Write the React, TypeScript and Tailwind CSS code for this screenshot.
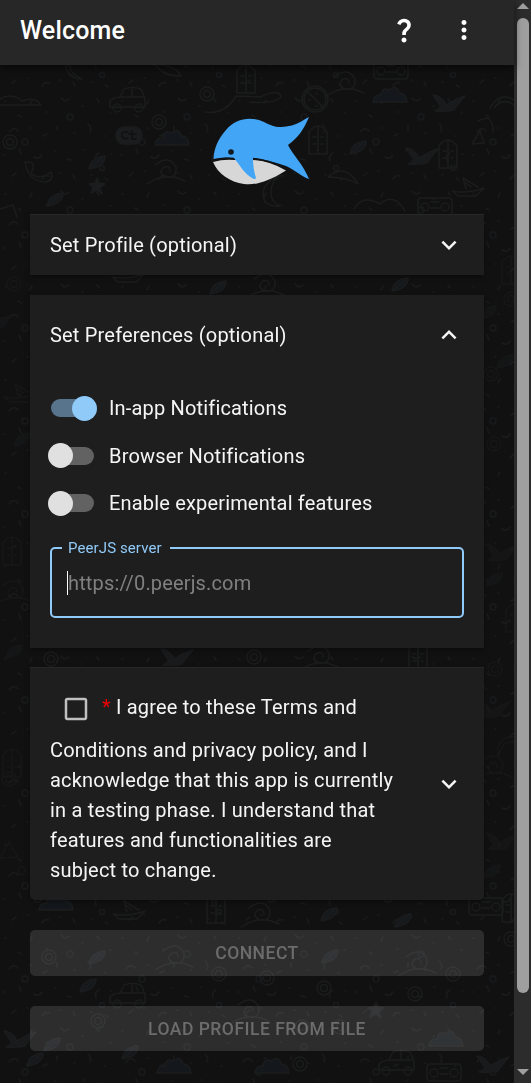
import React from 'react';
import { MdCheckBoxOutlineBlank, MdExpandLess, MdExpandMore, MdMoreVert, MdQuestionMark } from 'react-icons/md';

interface SettingSwitchProps {
  label: string;
  checked?: boolean;
}

const SettingSwitch: React.FC<SettingSwitchProps> = ({ label, checked = false }) => {
  return (
    <label className="flex items-center h-[47.5px]">
      <span className="flex items-center w-[43px] mr-[15px] ml-px">
        {checked ? (
          <>
            <span className="w-[43px] h-[18px] shrink-0 rounded-full bg-[#58748c]" />
            <span className="w-[25px] h-[25px] shrink-0 rounded-full bg-[#90caf9] -ml-[22px]" />
          </>
        ) : (
          <>
            <span className="w-[25px] h-[25px] shrink-0 rounded-full bg-[#e0e0e0] -ml-[3.5px] z-10" />
            <span className="w-[43px] h-[18px] shrink-0 rounded-full bg-[#626262] -ml-[21.5px]" />
          </>
        )}
      </span>
      <span className="text-[20px] leading-[30px] tracking-[0.17px]">{label}</span>
    </label>
  );
};

const Whale = () => (
  <svg className="w-[96px] h-[68px] shrink-0" viewBox="0 0 96 68">
    <path fill="#d7d7d7" d="M0 45Q10 42 22 43L40 43Q57 44 73 53.5C53 66 42 68 31 67C17 65 5 57 0 45Z" />
    <path fill="#42a5f5" d="M0.500 42C1 30 6 21 13 13C23 1 38-1 51 5C61 10 64 11 76 9C84 8 90 3 96 0C91 12 85 21 75 28C80 38 90 47 96 62C87 59 80 51 70 48C60 45 50 42 40 41C40 49 41 55 43 61Q42 63 39 61C32 57 28 50 21 41Q10 39.500 0.500 42Z" />
    {/* Dark seam between the back and the belly */}
    <path fill="none" stroke="#101418" strokeWidth="1.5" d="M0.500 43.500Q10 40.500 21 41.500M40 41.500Q58 43.500 73 52" />
    <circle cx="18" cy="35" r="2.8" fill="#101820" />
  </svg>
);

const Doodles = () => (
  <svg className="absolute inset-0 w-full h-full" fill="none" stroke="#1b1c1d" strokeWidth="1.5" strokeLinecap="round" strokeLinejoin="round">
    <defs>
      <g id="car"><path d="M-18 7V1Q-16-2-8-3L-4-11Q4-14 13-11L17-2V7ZM-8-3H15M4-11V-3" /><circle cx="-11" cy="8" r="4" /><circle cx="11" cy="8" r="4" /></g>
      <g id="bird"><path fill="#191a1b" d="M-16-8Q-7-7-3 2Q6-4 16-7Q7 3 5 7Q-2 9-14 8Q-7 5-9 2Z" /></g>
      <g id="leaf"><path fill="#16191c" d="M-8 6Q-6-6 8-7Q8 4-8 6L5-5" /></g>
      <g id="ring"><circle r="7" /><circle r="3.5" /></g>
      <g id="door"><path d="M-9 14V-8Q0-20 9-8V14ZM0-13V14M-5-3H-2M3-3H5M-5 4H-2M3 4H5" /></g>
      <g id="radio"><rect x="-17" y="-8" width="34" height="17" rx="3" /><circle cx="-10" cy="1" r="4" /><circle cx="10" cy="1" r="4" /><path d="M-4-4H4M-4 2H4" /></g>
      <g id="star"><path fill="#1c1d1e" d="M0-8L2-3L8-2L3 2L5 8L0 4L-6 7L-4 1L-8-2L-2-3Z" /></g>
      <g id="cloud"><path fill="#14181c" d="M-17 8Q-16 0-9 1Q-7-8-1-4Q7-10 9-1Q16-1 17 8Z" /></g>
      <g id="boat"><path d="M-16 5Q0 8 16 2L8 10H-10ZM-2 3L-5-8L10 1M-2-3L3 1" /></g>
      <g id="swirl"><path d="M-11-5Q3-16 10-3Q11 9 0 7Q-9 3-2-3Q4-5 4 1M-19 14Q0 1 19 11" /></g>
      {/* Small crumbs that fill the space between the drawings */}
      <pattern id="crumbs" width="117" height="93" patternUnits="userSpaceOnUse">
        <path stroke="#191a1b" d="M5 8h1M18 22l3 2M32 7l-2 4M46 19h1M61 5q4 5 8 1M82 13h1M97 6l2 3M110 20h1M9 39q5-6 9-1M30 35h1M43 43l4-2M57 33v4M74 40h1M88 31q4 3 2 8M104 43h1M4 62h1M19 56l2 5M34 64q5 3 8-2M55 58h1M67 66l4 1M83 57h1M96 68q-2-6 3-8M111 61h1M12 83l4-3M27 78h1M42 86q3-5 7-3M60 80h1M75 86l-2-4M91 82h1M105 85l3 2" />
        <g stroke="#17191b"><circle cx="25" cy="49" r="3" /><circle cx="70" cy="24" r="3" /><circle cx="102" cy="75" r="2.5" /></g>
      </pattern>
    </defs>
    <rect width="514" height="1083" fill="url(#crumbs)" stroke="none" />

    {/* Behind the logo */}
    <use href="#car" x="128" y="100" />
    <use href="#ring" x="207" y="94" />
    <use href="#door" x="246" y="79" />
    <use href="#cloud" x="390" y="94" />
    <use href="#cloud" x="172" y="137" />
    <use href="#bird" x="449" y="103" />
    <use href="#bird" x="422" y="156" />
    <use href="#door" x="318" y="140" />
    <use href="#door" x="448" y="154" />
    <use href="#boat" x="468" y="186" />
    <use href="#star" x="97" y="186" />
    <use href="#radio" x="435" y="206" />
    <use href="#radio" x="391" y="70" />
    <use href="#swirl" x="166" y="170" />
    <use href="#swirl" x="345" y="82" />
    <use href="#leaf" x="97" y="163" />
    <use href="#leaf" x="55" y="200" />
    <use href="#leaf" x="358" y="148" />
    <use href="#ring" x="159" y="122" />
    <use href="#ring" x="10" y="142" />
    <g>
      <circle cx="315" cy="99" r="13" /><circle cx="315" cy="99" r="11" /><path d="M308 92L323 107M309 100h1M316 94h1" />
      <rect x="116" y="127" width="26" height="17" rx="8" fill="#1b1c1d" />
      <path stroke="#111111" d="M128 132Q121 131 122 136Q123 140 128 138M132 131V139H136M129 134H136" />
      <path d="M65 66Q70 80 82 79Q72 75 69 66ZM156 65Q163 76 181 76Q177 67 160 65M205 112Q225 115 236 96L260 97Q280 88 281 97Q275 104 250 102M0 99Q11 92 22 101Q35 96 41 105H0" />
      <path d="M25 162Q38 161 31 173Q38 181 51 172Q54 181 45 182Q28 181 25 162ZM0 209L13 205L17 217M328 177Q345 162 358 184Q346 177 328 177M490 108Q500 91 514 100M494 108Q502 97 514 105" />
      <path d="M276 177Q258 187 265 202Q272 207 280 206Q264 198 276 177M354 209Q362 194 380 204Q394 192 405 211M478 121Q493 112 493 132M472 144L480 131L484 143Z" />
    </g>

    {/* Side margins */}
    <g opacity="0.6">
      <use href="#door" x="511" y="270" />
      <use href="#ring" x="14" y="284" />
      <use href="#ring" x="511" y="299" />
      <use href="#leaf" x="488" y="313" />
      <use href="#leaf" x="505" y="362" />
      <use href="#ring" x="491" y="374" />
      <use href="#leaf" x="0" y="324" />
      <use href="#boat" x="20" y="392" />
      <use href="#ring" x="494" y="444" />
      <use href="#leaf" x="22" y="440" />
      <use href="#door" x="12" y="551" />
      <use href="#bird" x="502" y="552" />
      <use href="#swirl" x="13" y="591" />
      <use href="#leaf" x="494" y="580" />
      <use href="#door" x="515" y="618" />
      <use href="#leaf" x="14" y="652" />
      <use href="#ring" x="495" y="669" />
      <use href="#bird" x="494" y="709" />
      <use href="#swirl" x="493" y="766" />
      <use href="#door" x="12" y="763" />
      <use href="#ring" x="9" y="779" />
      <use href="#bird" x="502" y="841" />
      <use href="#leaf" x="492" y="872" />
      <path d="M0 858L9 842L18 857ZM21 875q-5-5-1-8q5-1 5 4q-1 4-4 4M497 749Q502 735 514 737M501 749Q505 740 514 742" />
    </g>

    {/* Gaps between the panels */}
    <use href="#boat" x="128" y="272" />
    <use href="#leaf" x="218" y="288" />
    <use href="#swirl" x="265" y="284" />
    <use href="#leaf" x="400" y="285" />
    <use href="#ring" x="51" y="659" />
    <use href="#bird" x="177" y="657" />
    <use href="#ring" x="254" y="657" />
    <use href="#swirl" x="319" y="656" />
    <use href="#door" x="418" y="657" />

    {/* Around and behind the buttons */}
    <use href="#cloud" x="56" y="902" />
    <use href="#boat" x="129" y="909" />
    <use href="#door" x="216" y="909" />
    <use href="#swirl" x="260" y="913" />
    <use href="#leaf" x="329" y="915" />
    <use href="#leaf" x="403" y="921" />
    <use href="#radio" x="486" y="906" />
    <use href="#door" x="511" y="908" />
    <use href="#ring" x="49" y="957" />
    <use href="#leaf" x="97" y="958" />
    <use href="#swirl" x="174" y="956" />
    <use href="#ring" x="219" y="974" />
    <use href="#ring" x="267" y="978" />
    <use href="#leaf" x="330" y="957" />
    <use href="#swirl" x="417" y="962" />
    <use href="#ring" x="453" y="974" />
    <use href="#ring" x="511" y="939" />
    <use href="#leaf" x="88" y="986" />
    <use href="#car" x="128" y="996" />
    <use href="#ring" x="324" y="988" />
    <use href="#ring" x="415" y="994" />
    <use href="#swirl" x="249" y="1010" />
    <use href="#star" x="376" y="1010" />
    <use href="#bird" x="20" y="1039" />
    <use href="#leaf" x="52" y="1045" />
    <use href="#ring" x="98" y="1021" />
    <use href="#ring" x="302" y="1027" />
    <use href="#ring" x="340" y="1027" />
    <use href="#cloud" x="446" y="1038" />
    <use href="#leaf" x="130" y="1053" />
    <use href="#cloud" x="174" y="1065" />
    <use href="#cloud" x="272" y="1065" />
    <use href="#leaf" x="35" y="1060" />
    <use href="#ring" x="300" y="1064" />
    <use href="#car" x="397" y="1063" />
    <use href="#radio" x="444" y="1072" />
    <use href="#bird" x="493" y="1064" />
  </svg>
);

const Scrollbar = () => (
  <div className="w-[17px] h-full shrink-0 bg-[#2c2c2c] flex flex-col items-center">
    <div className="mt-[3px] w-0 h-0 border-x-[6px] border-x-transparent border-b-[6px] border-b-[#9f9f9f]" />
    <div className="mt-[9px] w-[12px] h-[975px] rounded-full bg-[#9f9f9f]" />
    <div className="mt-auto mb-[8px] w-0 h-0 border-x-[6px] border-x-transparent border-t-[6px] border-t-[#9f9f9f]" />
  </div>
);

const App: React.FC = () => {
  return (
    <div className="flex w-[531px] h-[1083px] overflow-hidden bg-[#111] text-[#f5f5f5] font-[Roboto,sans-serif]">
      <div className="relative flex flex-col flex-1 min-w-0">
        <Doodles />
        <header className="relative flex items-center h-[65px] shrink-0 pl-[20px] pr-[35px] pb-[5px] bg-[#272727] text-white shadow-[0_3px_8px_rgba(0,0,0,0.6)]">
          <h1 className="pt-[2px] text-[25px] font-medium leading-[40px] tracking-[0.19px]">Welcome</h1>
          <button className="ml-auto" aria-label="Help"><MdQuestionMark size={30} /></button>
          <button className="ml-[30px]" aria-label="Menu"><MdMoreVert size={30} /></button>
        </header>

        <main className="relative flex flex-col px-[30px] text-[20px] leading-[30px] tracking-[0.19px]">
          <div className="flex justify-center pt-[52px] h-[149px] pl-[8px]">
            <Whale />
          </div>

          <section className="flex items-center justify-between h-[61px] px-[20px] bg-[#1e1e1e] border-t border-[#272727] shadow-[0_2px_5px_rgba(0,0,0,0.35)]">
            <span>Set Profile (optional)</span>
            <MdExpandMore size={30} />
          </section>

          <section className="mt-[20px] h-[353px] px-[20px] bg-[#1e1e1e] shadow-[0_2px_5px_rgba(0,0,0,0.35)]">
            <div className="flex items-center justify-between h-[80px]">
              <span>Set Preferences (optional)</span>
              <MdExpandLess size={30} />
            </div>
            <div className="pt-[9.5px]">
              <SettingSwitch label="In-app Notifications" checked />
              <SettingSwitch label="Browser Notifications" />
              <SettingSwitch label="Enable experimental features" />
            </div>
            <fieldset className="mt-[11px] h-[79.5px] rounded-[5px] border-2 border-[#90caf9] px-[10px]">
              <legend className="pl-[6px] pr-[8px] text-[15px] leading-[20px] tracking-[0.1px] text-[#90caf9]">PeerJS server</legend>
              <div className="flex items-center h-[50px] pl-[5px]">
                <span className="w-px h-[24px] bg-white" />
                <span className="text-[#808080] tracking-[0.15px]">https://0.peerjs.com</span>
              </div>
            </fieldset>
          </section>

          <section className="flex items-center justify-between mt-[19px] h-[233px] px-[20px] bg-[#1e1e1e] border-t border-[#272727] rounded-b-[5px] shadow-[0_2px_5px_rgba(0,0,0,0.35)]">
            <div className="w-[350px]">
              <span className="inline-flex items-center align-middle h-[52px] w-[52px] pl-[11px]">
                <MdCheckBoxOutlineBlank size={30} className="text-[#c0c0c0]" />
              </span>
              <span className="text-[#f00000]">*</span> I agree to these Terms and Conditions and privacy policy, and I acknowledge that this app is currently in a testing phase. I understand that features and functionalities are subject to change.
            </div>
            <MdExpandMore size={30} />
          </section>

          <button className="mt-[30px] h-[46px] rounded-[5px] bg-white/12 text-[#6c6c6c] text-[17.5px] font-medium tracking-[0.5px]">CONNECT</button>
          <button className="mt-[30px] h-[45px] rounded-[5px] bg-white/12 text-[#6c6c6c] text-[17.5px] font-medium tracking-[0.5px]">LOAD PROFILE FROM FILE</button>
        </main>
      </div>
      <Scrollbar />
    </div>
  );
};

export default App;
